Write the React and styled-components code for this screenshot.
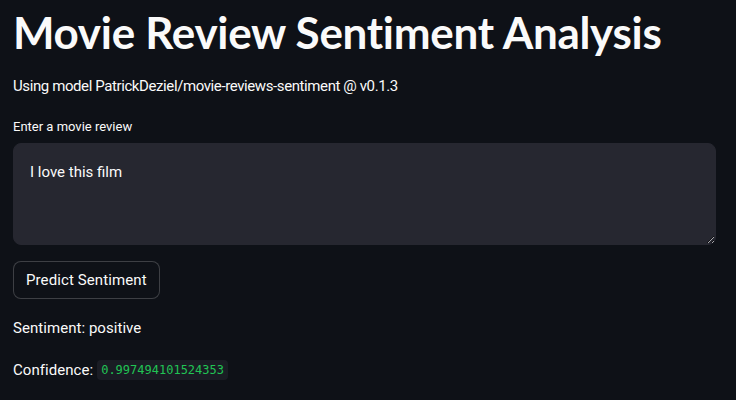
import React from "react";
import styled, { createGlobalStyle } from "styled-components";

const Global = createGlobalStyle`
  html, body { margin: 0; padding: 0; background: #0e1117; }
  body { font-family: Roboto, "Open Sans", sans-serif; color: #fafafa; }
  * { box-sizing: border-box; }
`;

const Main = styled.main`
  width: 736px;
  height: 400px;
  overflow: hidden;
  padding: 0 20px 0 13px;
  display: flex;
  flex-direction: column;
`;

const Title = styled.h1`
  margin: 4px 0 0;
  font-family: Lato, "Open Sans", sans-serif;
  font-size: 44px;
  line-height: 56px;
  font-weight: 700;
  letter-spacing: -0.3px;
  color: #fafafa;
`;

const Para = styled.p`
  margin: ${p => p.$mt || 0}px 0 0;
  font-size: 15px;
  line-height: 24px;
  letter-spacing: ${p => p.$tight ? "-0.4px" : "0.05px"};
  color: #fafafa;
  display: flex;
  align-items: center;
  gap: 4px;
`;

const Label = styled.label`
  margin-top: 20px;
  font-size: 13px;
  line-height: 18px;
  color: #fafafa;
`;

const TextArea = styled.textarea`
  margin-top: 7px;
  width: 703px;
  height: 102px;
  background: #262730;
  border: 1px solid #262730;
  border-radius: 8px;
  color: #fafafa;
  font-family: inherit;
  font-size: 15px;
  line-height: 22px;
  padding: 17px 16px;
  outline: none;
  resize: vertical;
`;

const Button = styled.button`
  margin-top: 16px;
  align-self: flex-start;
  height: 38px;
  padding: 0 12px;
  background: #0e1117;
  color: #fafafa;
  border: 1px solid rgba(250, 250, 250, 0.2);
  border-radius: 8px;
  font-family: inherit;
  font-size: 15px;
  letter-spacing: 0.1px;
`;

const Code = styled.code`
  font-family: "DejaVu Sans Mono", "Liberation Mono", monospace;
  font-size: 12px;
  letter-spacing: 0;
  color: #21c354;
  background: #1a1c24;
  border-radius: 4px;
  padding: 3px 4px;
  line-height: 14px;
`;

export default function App() {
  return (
    <>
      <Global />
      <Main>
        <Title>Movie Review Sentiment Analysis</Title>
        <Para $mt={14} $tight>Using model PatrickDeziel/movie-reviews-sentiment @ v0.1.3</Para>
        <Label>Enter a movie review</Label>
        <TextArea defaultValue="I love this film" />
        <Button>Predict Sentiment</Button>
        <Para $mt={17}>Sentiment: positive</Para>
        <Para $mt={18}>
          Confidence: <Code>0.997494101524353</Code>
        </Para>
      </Main>
    </>
  );
}
